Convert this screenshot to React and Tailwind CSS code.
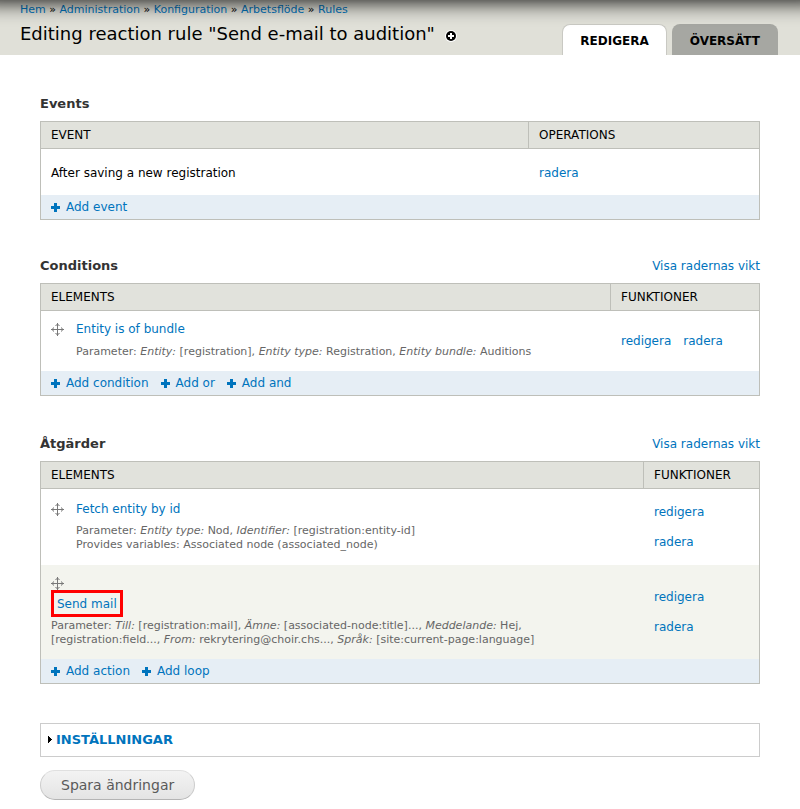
import React from "react";

const linkClass = "text-[#0074bd] hover:underline";

function MoveIcon() {
  return (
    <svg width="13" height="13" viewBox="0 0 13 13" fill="#787878" shapeRendering="crispEdges" aria-hidden="true">
      <path d="M6 1h1v11h-1zM1 6h11v1h-11z" />
      <path d="M5 1h3v1h-3zM4 2h5v1h-5zM5 11h3v1h-3zM4 10h5v1h-5zM1 5h1v3h-1zM2 4h1v5h-1zM11 5h1v3h-1zM10 4h1v5h-1z" fillOpacity="0.55" />
      <path d="M6 0h1v1h-1zM6 12h1v1h-1zM0 6h1v1h-1zM12 6h1v1h-1z" />
    </svg>
  );
}

function AddLink({ children }) {
  return (
    <a href="#" className={`${linkClass} flex items-center gap-[6px]`}>
      <svg width="9" height="9" viewBox="0 0 9 9" fill="#0074bd" shapeRendering="crispEdges" aria-hidden="true">
        <path d="M3 0h3v3h3v3H6v3H3V6H0V3h3z" />
      </svg>
      {children}
    </a>
  );
}

function SectionHeading({ title, weights }) {
  return (
    <div className="mb-2 flex items-center justify-between leading-[18px]">
      <h2 className="text-[13px] font-bold text-[#333]">{title}</h2>
      {weights && (
        <a href="#" className={linkClass}>
          Visa radernas vikt
        </a>
      )}
    </div>
  );
}

function RuleTable({ first, second, secondWidth, footer, children }) {
  return (
    <table className="w-full table-fixed border-separate border-spacing-0 border border-[#bebfb9] leading-[18px]">
      <thead>
        <tr className="bg-[#e1e2dc] text-left uppercase">
          <th className="border-b border-[#bebfb9] px-[10px] py-1 font-normal">{first}</th>
          <th className={`${secondWidth} border-b border-l border-[#bebfb9] px-[10px] py-1 font-normal`}>{second}</th>
        </tr>
      </thead>
      <tbody>{children}</tbody>
      <tfoot>
        <tr className="bg-[#e6eef5]">
          <td colSpan={2} className="px-[10px] py-[3px]">
            <div className="flex gap-3">
              {footer.map((label) => (
                <AddLink key={label}>{label}</AddLink>
              ))}
            </div>
          </td>
        </tr>
      </tfoot>
    </table>
  );
}

function Description({ children }) {
  return <div className="text-[11px] leading-[14px] text-[#666]">{children}</div>;
}

function Crumbs() {
  const items = ["Hem", "Administration", "Konfiguration", "Arbetsflöde", "Rules"];
  return (
    <nav aria-label="Breadcrumb" className="pt-[3px] text-[11px] leading-[14px]">
      {items.map((item, i) => (
        <React.Fragment key={item}>
          {i > 0 && " » "}
          <a href="#" className={linkClass}>
            {item}
          </a>
        </React.Fragment>
      ))}
    </nav>
  );
}

export default function App() {
  return (
    <div className="relative overflow-hidden bg-white pb-[9px] font-['DejaVu_Sans',sans-serif] text-[12px] text-black">
      <div className="pointer-events-none absolute -top-10 -right-5 -left-5 h-10 shadow-[0_3px_20px_rgba(0,0,0,0.88)]" />
      <header className="flex justify-between bg-[#e0e0d8] pr-[22px] pl-5">
        <div>
          <Crumbs />
          <div className="mt-[5px] flex items-center gap-[10px] pb-[9px]">
            <h1 className="text-[18px] leading-6">Editing reaction rule "Send e-mail to audition"</h1>
            <button type="button" aria-label="Add to shortcuts" className="mt-1">
              <svg width="12" height="12" viewBox="0 0 12 12" aria-hidden="true">
                <circle cx="6" cy="6" r="6" fill="#fff" />
                <circle cx="6" cy="6" r="5" fill="#000" />
                <path d="M5 3h2v2h2v2H7v2H5V7H3V5h2z" fill="#fff" />
              </svg>
            </button>
          </div>
        </div>
        <nav aria-label="Tabs" className="flex items-end gap-[5px] font-bold uppercase leading-[18px]">
          <a href="#" className="rounded-t-lg border border-b-0 border-[#c9c9c3] bg-white px-[17px] pt-[7px] pb-[5px]">
            Redigera
          </a>
          <a href="#" className="rounded-t-lg bg-[#a6a7a2] px-[18px] pt-2 pb-[5px]">
            Översätt
          </a>
        </nav>
      </header>

      <main className="px-10 pt-10">
        <section>
          <SectionHeading title="Events" />
          <RuleTable first="Event" second="Operations" secondWidth="w-[231px]" footer={["Add event"]}>
            <tr>
              <td className="px-[10px] pt-[15px] pb-[13px]">After saving a new registration</td>
              <td className="px-[11px] pt-[15px] pb-[13px]">
                <a href="#" className={linkClass}>radera</a>
              </td>
            </tr>
          </RuleTable>
        </section>

        <section className="mt-[37px]">
          <SectionHeading title="Conditions" weights />
          <RuleTable
            first="Elements"
            second="Funktioner"
            secondWidth="w-[149px]"
            footer={["Add condition", "Add or", "Add and"]}
          >
            <tr>
              <td className="px-[10px] pt-[9px] pb-3">
                <div className="flex gap-3">
                  <div className="pt-[3px]"><MoveIcon /></div>
                  <div>
                    <a href="#" className={`${linkClass} mb-[7px] block`}>Entity is of bundle</a>
                    <Description>
                      Parameter: <em>Entity:</em> [registration], <em>Entity type:</em> Registration,{" "}
                      <em>Entity bundle:</em> Auditions
                    </Description>
                  </div>
                </div>
              </td>
              <td className="px-[11px] align-middle">
                <div className="flex gap-3">
                  <a href="#" className={linkClass}>redigera</a>
                  <a href="#" className={linkClass}>radera</a>
                </div>
              </td>
            </tr>
          </RuleTable>
        </section>

        <section className="mt-[39px]">
          <SectionHeading title="Åtgärder" weights />
          <RuleTable
            first="Elements"
            second="Funktioner"
            secondWidth="w-[116px]"
            footer={["Add action", "Add loop"]}
          >
            <tr>
              <td className="px-[10px] pt-[11px] pb-[13px]">
                <div className="flex gap-3">
                  <div className="pt-[3px]"><MoveIcon /></div>
                  <div>
                    <a href="#" className={`${linkClass} mb-[6px] block`}>Fetch entity by id</a>
                    <Description>
                      Parameter: <em>Entity type:</em> Nod, <em>Identifier:</em> [registration:entity-id]
                      <br />
                      Provides variables: Associated node (associated_node)
                    </Description>
                  </div>
                </div>
              </td>
              <td className="px-[11px] align-middle">
                <div className="flex flex-col items-start gap-3">
                  <a href="#" className={linkClass}>redigera</a>
                  <a href="#" className={linkClass}>radera</a>
                </div>
              </td>
            </tr>
            <tr className="bg-[#f3f4ee]">
              <td className="px-[10px] py-3">
                <MoveIcon />
                <a
                  href="#"
                  className={`${linkClass} mb-[2px] block w-fit border-[3px] border-[#f00] px-[3px] pt-[2px] pb-px`}
                >
                  Send mail
                </a>
                <Description>
                  Parameter: <em>Till:</em> [registration:mail], <em>Ämne:</em> [associated-node:title]...,{" "}
                  <em>Meddelande:</em> Hej, [registration:field..., <em>From:</em> rekrytering@choir.chs...,{" "}
                  <em>Språk:</em> [site:current-page:language]
                </Description>
              </td>
              <td className="px-[11px] align-middle">
                <div className="flex flex-col items-start gap-3">
                  <a href="#" className={linkClass}>redigera</a>
                  <a href="#" className={linkClass}>radera</a>
                </div>
              </td>
            </tr>
          </RuleTable>
        </section>

        <details className="mt-[39px] border border-[#ccc] px-[7px] py-[7px] leading-[18px]">
          <summary className="flex cursor-pointer list-none items-center gap-[3px] text-[13px] font-bold uppercase text-[#0074bd]">
            <svg width="5" height="8" viewBox="0 0 5 8" aria-hidden="true">
              <path d="M0 0h1v1h1v1h1v1h1v1h-1v1h-1v1h-1v1h-1z" fill="#000" />
            </svg>
            Inställningar
          </summary>
        </details>

        <button
          type="button"
          className="mt-[13px] rounded-full border border-[#ccc] border-t-[#e0e0e0] border-b-[#b4b4b4] bg-linear-to-b from-[#f3f3f3] to-[#e4e4e4] px-5 py-1 text-[14px] leading-5 text-[#5a5a5a]"
        >
          Spara ändringar
        </button>
      </main>
    </div>
  );
}
